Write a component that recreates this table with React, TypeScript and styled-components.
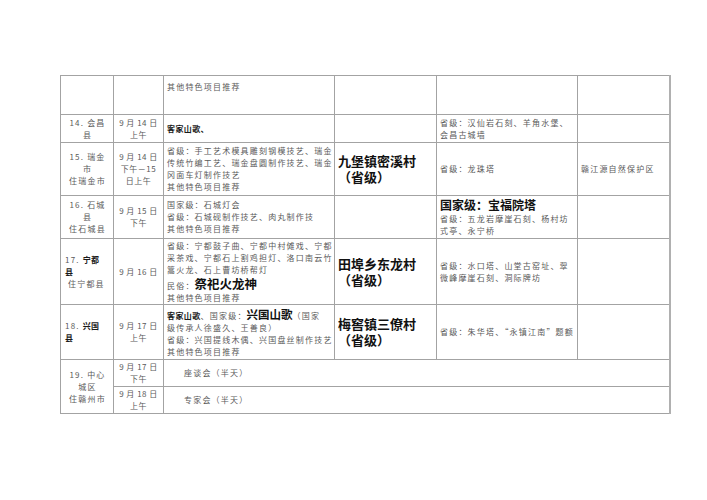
import React from 'react'
import styled, { createGlobalStyle } from 'styled-components'

const Global = createGlobalStyle`
  html, body {
    margin: 0;
    padding: 0;
    background: #ffffff;
  }
  body {
    font-family: "Noto Sans CJK SC", "Noto Sans", sans-serif;
    color: #4a4a4a;
  }
`

const Page = styled.div`
  width: 707px;
  height: 500px;
  padding: 75px 0 0 60px;
  box-sizing: border-box;
`

const Sheet = styled.table`
  width: 609px;
  table-layout: fixed;
  border-collapse: collapse;
  border: 1px solid #a3a3a3;
  border-right: 2px solid #b0b0b0;
`

const Row = styled.tr<{ h: number }>`
  height: ${p => p.h}px;
`

const Cell = styled.td<{ align?: string; valign?: string; pl?: number }>`
  border: 1px solid #a3a3a3;
  padding: 0 2px 0 ${p => (p.pl !== undefined ? p.pl : 3)}px;
  text-align: ${p => p.align || 'left'};
  vertical-align: ${p => p.valign || 'middle'};
  font-size: 8px;
  line-height: 12px;
  letter-spacing: 1.2px;
  color: #5a5a5a;
  overflow: hidden;
  white-space: nowrap;
`

const DateCell = styled(Cell)`
  letter-spacing: 0.5px;
  padding: 0;
`

const Line = styled.div`
  display: block;
`

const Strong = styled.b`
  font-weight: 700;
  color: #1a1a1a;
  letter-spacing: 0.4px;
`

const Big = styled.b<{ size?: number }>`
  font-weight: 700;
  color: #111111;
  font-size: ${p => p.size || 12}px;
  letter-spacing: 0;
  line-height: 15px;
`

const Village = styled.div`
  font-size: 13px;
  line-height: 16px;
  font-weight: 700;
  color: #111111;
  letter-spacing: 0;
`

const Notes = styled.div`
  padding-top: 5px;
`

const Meeting = styled.span`
  padding-left: 17px;
`

const Village2 = ({ name }: { name: string }) => (
  <Village>
    <Line>{name}</Line>
    <Line>（省级）</Line>
  </Village>
)

export default function App() {
  return (
    <Page>
      <Global />
      <Sheet>
        <colgroup>
          <col style={{ width: 53 }} />
          <col style={{ width: 50 }} />
          <col style={{ width: 171 }} />
          <col style={{ width: 102 }} />
          <col style={{ width: 141 }} />
          <col style={{ width: 92 }} />
        </colgroup>
        <tbody>
          <Row h={39}>
            <Cell />
            <Cell />
            <Cell valign="top">
              <Notes>其他特色项目推荐</Notes>
            </Cell>
            <Cell />
            <Cell />
            <Cell />
          </Row>
          <Row h={28}>
            <Cell align="center">
              <Line>14. 会昌</Line>
              <Line>县</Line>
            </Cell>
            <DateCell align="center">
              <Line>9 月 14 日</Line>
              <Line>上午</Line>
            </DateCell>
            <Cell>
              <Strong>客家山歌、</Strong>
            </Cell>
            <Cell />
            <Cell>
              <Line>省级：汉仙岩石刻、羊角水堡、</Line>
              <Line>会昌古城墙</Line>
            </Cell>
            <Cell />
          </Row>
          <Row h={53}>
            <Cell align="center">
              <Line>15. 瑞金</Line>
              <Line>市</Line>
              <Line>住瑞金市</Line>
            </Cell>
            <DateCell align="center">
              <Line>9 月 14 日</Line>
              <Line>下午－15</Line>
              <Line>日上午</Line>
            </DateCell>
            <Cell>
              <Line>省级：手工艺术模具雕刻钢模技艺、瑞金</Line>
              <Line>传统竹编工艺、瑞金盘圆制作技艺、瑞金</Line>
              <Line>冈面车灯制作技艺</Line>
              <Line>其他特色项目推荐</Line>
            </Cell>
            <Cell>
              <Village2 name="九堡镇密溪村" />
            </Cell>
            <Cell>省级：龙珠塔</Cell>
            <Cell>赣江源自然保护区</Cell>
          </Row>
          <Row h={43}>
            <Cell align="center">
              <Line>16. 石城</Line>
              <Line>县</Line>
              <Line>住石城县</Line>
            </Cell>
            <DateCell align="center">
              <Line>9 月 15 日</Line>
              <Line>下午</Line>
            </DateCell>
            <Cell>
              <Line>国家级：石城灯会</Line>
              <Line>省级：石城砚制作技艺、肉丸制作技</Line>
              <Line>其他特色项目推荐</Line>
            </Cell>
            <Cell />
            <Cell>
              <Line>
                <Big size={12}>国家级：宝福院塔</Big>
              </Line>
              <Line>省级：五龙岩摩崖石刻、杨村坊</Line>
              <Line>式亭、永宁桥</Line>
            </Cell>
            <Cell />
          </Row>
          <Row h={66}>
            <Cell align="left" pl={4}>
              <Line>
                17. <Strong>宁都</Strong>
              </Line>
              <Line>
                <Strong>县</Strong>
              </Line>
              <Line>&nbsp;住宁都县</Line>
            </Cell>
            <DateCell align="center">9 月 16 日</DateCell>
            <Cell>
              <Line>省级：宁都鼓子曲、宁都中村傩戏、宁都</Line>
              <Line>采茶戏、宁都石上割鸡担灯、洛口南云竹</Line>
              <Line>篙火龙、石上曹坊桥帮灯</Line>
              <Line>
                民俗：<Big size={12.5}>祭祀火龙神</Big>
              </Line>
              <Line>其他特色项目推荐</Line>
            </Cell>
            <Cell>
              <Village2 name="田埠乡东龙村" />
            </Cell>
            <Cell>
              <Line>省级：水口塔、山堂古窑址、翠</Line>
              <Line>微峰摩崖石刻、洞际牌坊</Line>
            </Cell>
            <Cell />
          </Row>
          <Row h={55}>
            <Cell align="left" pl={4}>
              <Line>
                18. <Strong>兴国</Strong>
              </Line>
              <Line>
                <Strong>县</Strong>
              </Line>
            </Cell>
            <DateCell align="center">
              <Line>9 月 17 日</Line>
              <Line>上午</Line>
            </DateCell>
            <Cell>
              <Line>
                <Strong>客家山歌</Strong>、国家级：<Big size={11.5}>兴国山歌</Big>（国家
              </Line>
              <Line>级传承人徐盛久、王善良）</Line>
              <Line>省级：兴国提线木偶、兴国盘丝制作技艺</Line>
              <Line>其他特色项目推荐</Line>
            </Cell>
            <Cell>
              <Village2 name="梅窖镇三僚村" />
            </Cell>
            <Cell>省级：朱华塔、“永镇江南”题额</Cell>
            <Cell />
          </Row>
          <Row h={27}>
            <Cell align="center" rowSpan={2}>
              <Line>19. 中心</Line>
              <Line>城区</Line>
              <Line>住赣州市</Line>
            </Cell>
            <DateCell align="center">
              <Line>9 月 17 日</Line>
              <Line>下午</Line>
            </DateCell>
            <Cell colSpan={4}>
              <Meeting>座谈会（半天）</Meeting>
            </Cell>
          </Row>
          <Row h={27}>
            <DateCell align="center">
              <Line>9 月 18 日</Line>
              <Line>上午</Line>
            </DateCell>
            <Cell colSpan={4}>
              <Meeting>专家会（半天）</Meeting>
            </Cell>
          </Row>
        </tbody>
      </Sheet>
    </Page>
  )
}
